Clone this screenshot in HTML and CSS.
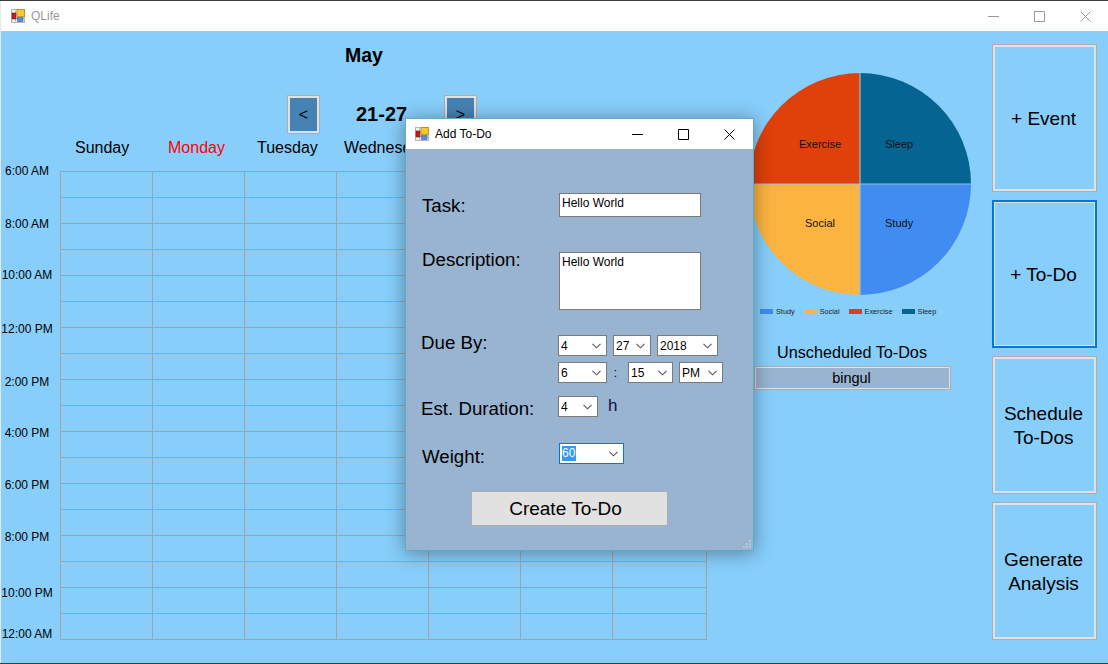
FILE: index.html
```html
<!DOCTYPE html>
<html lang="en">
<head>
<meta charset="utf-8">
<title>QLife</title>
<link rel="stylesheet" href="styles.css">
</head>
<body>
<svg class="defs" aria-hidden="true">
  <symbol id="app" viewBox="0 0 14 14">
    <rect x=".5" y=".5" width="13" height="13" fill="#f2f2f2" stroke="#b4b4b4"/>
    <path d="M0 5h6M0 9.500h14M4.500 0v14M9.500 9v5" stroke="#c4c4c4" stroke-width="1"/>
    <rect x="1" y="4" width="4" height="6" fill="#c02018" stroke="#801010" stroke-width=".6"/>
    <rect x="6" y="0.500" width="7.500" height="7" fill="#f8c828" stroke="#b08a20" stroke-width=".8"/>
    <rect x="6.500" y="8.500" width="5.500" height="4" fill="#5b8ad8" stroke="#3a62a8" stroke-width=".6"/>
  </symbol>
  <symbol id="chev" viewBox="0 0 9 6">
    <path d="M.5 .8 4.500 4.800 8.500 .8" fill="none" stroke="#555" stroke-width="1.100"/>
  </symbol>
</svg>
<div class="window">
  <header class="titlebar">
    <svg class="app-icon"><use href="#app"/></svg>
    <span class="app-name">QLife</span>
    <div class="winctl winctl-main">
      <svg viewBox="0 0 11 11"><path d="M0 5.500h11" /></svg>
      <svg viewBox="0 0 11 11"><path d="M.5 .5h10v10h-10z" /></svg>
      <svg viewBox="0 0 11 11"><path d="M.5 .5l10 10M10.500 .5l-10 10" /></svg>
    </div>
  </header>
  <main class="main">
    <section class="calendar">
      <h1 class="month">May</h1>
      <div class="week-nav">
        <button class="nav-btn">&lt;</button>
        <span class="week">21-27</span>
        <button class="nav-btn">&gt;</button>
      </div>
      <div class="days">
        <span>Sunday</span><span class="today">Monday</span><span>Tuesday</span><span>Wednesday</span>
      </div>
      <div class="schedule">
        <div class="times">
          <span>6:00 AM</span><span>8:00 AM</span><span>10:00 AM</span><span>12:00 PM</span><span>2:00 PM</span><span>4:00 PM</span><span>6:00 PM</span><span>8:00 PM</span><span>10:00 PM</span><span>12:00 AM</span>
        </div>
        <div class="grid">
          <div></div><div></div><div></div><div></div><div></div><div></div><div></div>
        </div>
      </div>
    </section>
    <section class="analytics">
      <svg class="pie" viewBox="0 0 222 222">
        <path d="M111 111V0A111 111 0 0 1 222 111Z" fill="#056492"/>
        <path d="M111 111H222A111 111 0 0 1 111 222Z" fill="#418cf0"/>
        <path d="M111 111V222A111 111 0 0 1 0 111Z" fill="#fcb441"/>
        <path d="M111 111H0A111 111 0 0 1 111 0Z" fill="#e0400a"/>
        <path d="M111 0V222M0 111H222" stroke="#8fc0e6" stroke-width="1.200"/>
        <text x="50" y="75">Exercise</text>
        <text x="136" y="75">Sleep</text>
        <text x="56" y="154">Social</text>
        <text x="136" y="154">Study</text>
      </svg>
      <ul class="legend">
        <li><i class="sw-study"></i>Study</li>
        <li><i class="sw-social"></i>Social</li>
        <li><i class="sw-exercise"></i>Exercise</li>
        <li><i class="sw-sleep"></i>Sleep</li>
      </ul>
      <h2 class="unsched">Unscheduled To-Dos</h2>
      <button class="todo-item">bingul</button>
    </section>
    <aside class="actions">
      <button class="action">+ Event</button>
      <button class="action active">+ To-Do</button>
      <button class="action short">Schedule<br>To-Dos</button>
      <button class="action short">Generate<br>Analysis</button>
    </aside>
  </main>

  <div class="dialog">
    <header class="dlg-title">
      <svg class="app-icon"><use href="#app"/></svg>
      <span class="dlg-name">Add To-Do</span>
      <div class="winctl winctl-dlg">
        <svg viewBox="0 0 11 11"><path d="M0 5.500h11" /></svg>
        <svg viewBox="0 0 11 11"><path d="M.5 .5h10v10h-10z" /></svg>
        <svg viewBox="0 0 11 11"><path d="M.5 .5l10 10M10.500 .5l-10 10" /></svg>
      </div>
    </header>
    <form class="dlg-body">
      <div class="row row-task">
        <label>Task:</label>
        <div class="field field-task">Hello World</div>
      </div>
      <div class="row row-desc">
        <label>Description:</label>
        <div class="field field-desc">Hello World</div>
      </div>
      <div class="row row-due">
        <label>Due By:</label>
        <div class="due-stack">
          <div class="combos">
            <div class="combo w49">4<svg><use href="#chev"/></svg></div>
            <div class="combo w38">27<svg><use href="#chev"/></svg></div>
            <div class="combo w61">2018<svg><use href="#chev"/></svg></div>
          </div>
          <div class="combos">
            <div class="combo w49">6<svg><use href="#chev"/></svg></div>
            <span class="colon">:</span>
            <div class="combo w45">15<svg><use href="#chev"/></svg></div>
            <div class="combo w44">PM<svg><use href="#chev"/></svg></div>
          </div>
        </div>
      </div>
      <div class="row row-dur">
        <label>Est. Duration:</label>
        <div class="combo w40">4<svg><use href="#chev"/></svg></div>
        <span class="unit">h</span>
      </div>
      <div class="row row-weight">
        <label>Weight:</label>
        <div class="combo w65 focus"><span class="sel">60</span><svg><use href="#chev"/></svg></div>
      </div>
      <button class="create" type="button">Create To-Do</button>
    </form>
    <svg class="grip" viewBox="0 0 9 9"><path d="M6 0h2v2h-2zM3 3h2v2h-2zM6 3h2v2h-2zM0 6h2v2h-2zM3 6h2v2h-2zM6 6h2v2h-2z" fill="#b4c6da"/></svg>
  </div>
</div>
</body>
</html>
```

FILE: styles.css
```css
* { box-sizing: border-box; }
html, body { margin: 0; height: 100%; }
body {
  width: 1108px;
  height: 664px;
  overflow: hidden;
  background: #e8e8e8;
  font-family: "Liberation Sans", Arial, sans-serif;
  color: #000;
}
.defs { position: absolute; width: 0; height: 0; }
button { font-family: inherit; padding: 0; margin: 0; color: #000; }

.window {
  position: relative;
  width: 1108px;
  height: 664px;
  display: flex;
  flex-direction: column;
  border-top: 1px solid #3c3c3c;
  border-bottom: 1px solid #3c3c3c;
  padding-left: 1px;
}

.titlebar {
  height: 30px;
  flex: none;
  background: #fff;
  display: flex;
  align-items: center;
  padding-left: 10px;
}
.app-icon { width: 14px; height: 14px; flex: none; }
.app-name { margin-left: 6px; font-size: 12px; color: #999; }
.winctl { margin-left: auto; display: flex; }
.winctl svg { width: 11px; height: 11px; fill: none; }
.winctl-main { gap: 35px; padding-right: 17px; }
.winctl-main svg { stroke: #999; stroke-width: 1; }
.winctl-dlg { gap: 35px; padding-right: 18px; }
.winctl-dlg svg { stroke: #000; stroke-width: 1; }

.main {
  flex: 1;
  min-height: 0;
  display: flex;
  background: #87cefa;
}

/* Calendar */
.calendar { width: 748px; flex: none; display: flex; flex-direction: column; }
.month {
  margin: 12px 0 0 344px;
  font-size: 19.500px;
  line-height: 24px;
  font-weight: bold;
}
.week-nav {
  margin: 28px 0 0 286px;
  height: 39px;
  display: flex;
  align-items: center;
}
.nav-btn {
  width: 33px;
  height: 39px;
  border: 3px solid #e1e1e1;
  outline: 1px solid #adadad;
  outline-offset: -1px;
  background: #4682b4;
  font-size: 16px;
  line-height: 30px;
}
.week {
  width: 124px;
  padding-left: 36px;
  font-size: 20px;
  font-weight: bold;
}
.days {
  margin-top: 4px;
  height: 26px;
  padding-left: 74px;
  display: flex;
  font-size: 16px;
  line-height: 20px;
}
.days span { flex: none; }
.days span:nth-child(1) { width: 93px; }
.days span:nth-child(2) { width: 89px; }
.days span:nth-child(3) { width: 87px; }
.days span:nth-child(4) { width: 92px; }
.today { color: #f00; }

.schedule { display: flex; }
.times {
  width: 59px;
  flex: none;
  display: flex;
  flex-direction: column;
  padding-right: 7px;
  font-size: 12px;
  line-height: 14px;
  text-align: center;
}
.times span:nth-child(1) { height: 53px; }
.times span:nth-child(2) { height: 51px; }
.times span:nth-child(3) { height: 54px; }
.times span:nth-child(4) { height: 53px; }
.times span:nth-child(5) { height: 51px; }
.times span:nth-child(6) { height: 52px; }
.times span:nth-child(7) { height: 52px; }
.times span:nth-child(8) { height: 56px; }
.times span:nth-child(9) { height: 41px; }
.grid {
  margin-top: 7px;
  height: 469px;
  width: 647px;
  display: grid;
  grid-template-columns: repeat(6, 92px) 94px;
  border-right: 1px solid #a3a3a3;
  border-bottom: 1px solid #a3a3a3;
}
.grid div {
  border-left: 1px solid #a3a3a3;
  background: linear-gradient(#a3a3a3 1px, transparent 1px) 0 0 / 100% 26px;
}

/* Analytics */
.analytics {
  width: 243px;
  flex: none;
  padding-top: 42px;
  display: flex;
  flex-direction: column;
}
.pie { width: 222px; height: 222px; flex: none; display: block; }
.pie text { font-size: 11px; fill: #111; font-family: "Liberation Sans", Arial, sans-serif; }
.legend {
  list-style: none;
  margin: 11px 0 0 11px;
  padding: 0;
  height: 10px;
  display: flex;
  font-size: 7.300px;
  line-height: 9px;
  color: #222;
}
.legend li { display: flex; align-items: center; gap: 3px; margin-right: 9px; }
.legend i { width: 13px; height: 5px; display: block; }
.sw-study { background: #418cf0; }
.sw-social { background: #fcb441; }
.sw-exercise { background: #e0400a; }
.sw-sleep { background: #056492; }
.unsched {
  margin: 26px 0 0 28px;
  font-size: 16.200px;
  line-height: 20px;
  font-weight: normal;
}
.todo-item {
  margin: 4px 0 0 5px;
  width: 197px;
  height: 24px;
  padding-right: 2px;
  border: 2px solid #e1e1e1;
  outline: 1px solid #adadad;
  outline-offset: -1px;
  background: #99b4d1;
  font-size: 14.500px;
}

/* Actions */
.actions {
  flex: none;
  width: 105px;
  padding-top: 13px;
  display: flex;
  flex-direction: column;
  gap: 8px;
}
.action {
  height: 148px;
  padding: 2px 2px 0 0;
  border: 3px solid #e1e1e1;
  outline: 1px solid #adadad;
  outline-offset: -1px;
  background: transparent;
  font-size: 19px;
  line-height: 24px;
}
.action.short { height: 138px; }
.action.active { outline: 2px solid #0078d7; outline-offset: -2px; }

/* Dialog: a window floating over the main form */
.dialog {
  position: absolute;
  left: 405px;
  top: 117px;
  width: 349px;
  height: 433px;
  display: flex;
  flex-direction: column;
  border: 1px solid #63a8c4;
  background: #99b4d1;
  box-shadow: 0 2px 18px rgba(0, 0, 0, .38);
}
.dlg-title {
  height: 30px;
  flex: none;
  background: #fff;
  display: flex;
  align-items: center;
  padding-left: 9px;
}
.dlg-name { margin-left: 6px; font-size: 12px; }
.dlg-body { display: flex; flex-direction: column; padding-left: 16px; }
.row { display: flex; align-items: flex-start; }
.row label { width: 136px; flex: none; font-size: 18.700px; line-height: 20px; }
.row-task { margin-top: 44px; }
.row-task label { margin-top: 3px; }
.row-desc { margin-top: 35px; }
.row-desc label { margin-top: -2px; }
.row-due { margin-top: 25px; }
.row-due label { margin: -2px 1px 0 -1px; }
.row-dur { margin-top: 13px; }
.row-dur label { margin: 3px 1px 0 -1px; }
.row-weight { margin-top: 24px; }
.row-weight label { margin-top: 4px; }

.field {
  margin-left: 1px;
  width: 142px;
  background: #fff;
  border: 1px solid #7a7a7a;
  font-size: 12px;
  line-height: 14px;
  padding: 2px 2px;
}
.field-task { height: 24px; }
.field-desc { height: 58px; }

.due-stack { display: flex; flex-direction: column; gap: 6px; }
.combos { display: flex; gap: 6px; align-items: center; }
.combo {
  height: 21px;
  display: flex;
  align-items: center;
  justify-content: space-between;
  padding: 0 5px 0 2px;
  background: #fff;
  border: 1px solid #7a7a7a;
  font-size: 12px;
}
.combo svg { width: 9px; height: 6px; flex: none; }
.w49 { width: 49px; }
.w38 { width: 38px; }
.w61 { width: 61px; }
.w45 { width: 45px; }
.w44 { width: 44px; }
.w40 { width: 40px; }
.w65 { width: 65px; }
.colon { width: 15px; margin-left: -6px; text-align: center; font-size: 12px; padding-left: 2px; }
.unit { margin-left: 10px; font-size: 17px; line-height: 20px; color: #101040; }
.focus { margin-left: 1px; border-color: #0078d7; }
.sel { background: #3399ff; color: #fff; line-height: 15px; padding-right: 1px; }
.create {
  margin: 24px 0 0 49px;
  width: 197px;
  height: 35px;
  padding-right: 8px;
  border: 1px solid #adadad;
  background: #e1e1e1;
  font-size: 19px;
}
.grip { position: absolute; right: 1px; bottom: 1px; width: 9px; height: 9px; }
```
